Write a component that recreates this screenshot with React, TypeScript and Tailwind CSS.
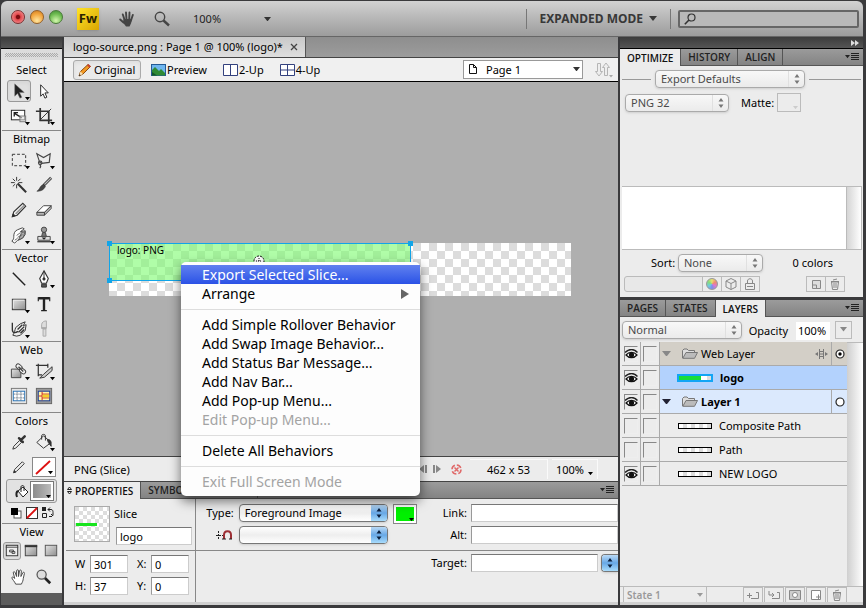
import { useState } from "react"
import type { ReactNode } from "react"
import clsx from "clsx"

interface LayerItem {
  name: string
  kind: "web" | "slice" | "layer" | "object"
  visible: boolean
}

interface MenuEntry {
  label?: string
  submenu?: boolean
  disabled?: boolean
}

const layers: LayerItem[] = [
  { name: "Web Layer", kind: "web", visible: true },
  { name: "logo", kind: "slice", visible: true },
  { name: "Layer 1", kind: "layer", visible: true },
  { name: "Composite Path", kind: "object", visible: false },
  { name: "Path", kind: "object", visible: false },
  { name: "NEW LOGO", kind: "object", visible: true },
]

// an entry without a label is a separator
const menuEntries: MenuEntry[] = [
  { label: "Export Selected Slice..." },
  { label: "Arrange", submenu: true },
  {},
  { label: "Add Simple Rollover Behavior" },
  { label: "Add Swap Image Behavior..." },
  { label: "Add Status Bar Message..." },
  { label: "Add Nav Bar..." },
  { label: "Add Pop-up Menu..." },
  { label: "Edit Pop-up Menu...", disabled: true },
  {},
  { label: "Delete All Behaviors" },
  {},
  { label: "Exit Full Screen Mode", disabled: true },
]

const toolIcons: Record<string, ReactNode> = {
  Pointer: <path d="M6 3v13l3-3 2.500 5 2-1-2.500-5H16z" fill="#222" stroke="#777" strokeWidth=".5" />,
  Subselection: <path d="M7 4v12l2.500-2.500 2 4.500 2-1-2-4.500H15z" fill="#fff" stroke="#222" />,
  Scale: (
    <g fill="none" stroke="#222">
      <rect x="2.500" y="4.500" width="14" height="10" fill="#fff" />
      <path d="M5.500 7.500l8 5M5.500 11V7h4" strokeWidth="1.400" />
      <rect x="11.500" y="10.500" width="6" height="6" stroke="#777" fill="#ddd" fillOpacity=".6" />
    </g>
  ),
  Crop: (
    <g fill="none" stroke="#333" strokeWidth="1.800">
      <path d="M6.500 2v13H19M2 5.500h13.500V19" />
      <path d="M6 15L18 3" strokeWidth="1" />
    </g>
  ),
  Marquee: <rect x="3.500" y="4.500" width="14" height="12" fill="none" stroke="#333" strokeDasharray="3 2" />,
  Lasso: (
    <g fill="none" stroke="#444" strokeWidth="1.200">
      <path d="M6 13L3 4l7 4 7-4-1 9-8 1z" />
      <circle cx="6.500" cy="13.500" r="1.800" />
      <path d="M6 15c1 1 2 2 0 4" />
    </g>
  ),
  "Magic Wand": (
    <g fill="none" stroke="#333">
      <path d="M9 9l9 9" strokeWidth="2.200" />
      <path d="M8 2v4M8 10v4M2 8h4M10 8h4M4 4l2.500 2.500M12 4L9.500 6.500M4 12l2.500-2.500" />
    </g>
  ),
  Brush: (
    <g stroke="#333">
      <path d="M18 3l-8 8" strokeWidth="3" />
      <path d="M18 3l-7 7" stroke="#bbb" strokeWidth="1.300" />
      <path d="M10 10l2 2c-2 4-5 5-9 5 3-1 3-6 7-7z" fill="#444" strokeWidth=".6" />
    </g>
  ),
  Pencil: (
    <g stroke="#333">
      <path d="M3.500 17.500l1.500-5L14.500 3.500l3 3L8.500 16z" fill="#f6f6f6" strokeWidth="1.200" />
      <path d="M7 14.500L16 5.500" stroke="#999" strokeWidth="1.800" />
      <path d="M3.500 17.500l.8-3 2.200 2z" fill="#222" />
    </g>
  ),
  "Stroke Pencil": (
    <g stroke="#333">
      <path d="M5 16.500l1-3.500L14 5l2 2-8 8z" fill="#eee" />
      <path d="M5 16.500l.6-2 1.400 1.400z" fill="#222" />
    </g>
  ),
  Eraser: (
    <g stroke="#444" strokeLinejoin="round">
      <path d="M3 13l7-7h8l-7 7z" fill="#fff" />
      <path d="M3 13v3h8v-3zM11 13v3l7-7V6z" fill="#b5b5b5" />
    </g>
  ),
  Smudge: (
    <g stroke="#444" strokeLinejoin="round">
      <path d="M3 17c2-2 2-3 2-5 0-3 1-6 4-7l5-2 2 1-4 3 5-1v4l-3 4-5 2-3 3z" fill="#fff" />
      <path d="M8 11l4-3M9 13l5-3M6 16l3-2M13 8l4-1-2 6-5 3z" fill="#aaa" strokeWidth=".8" />
    </g>
  ),
  "Rubber Stamp": (
    <g fill="#777" stroke="#444">
      <circle cx="10.500" cy="5" r="2.800" fill="#999" />
      <path d="M9 8h3l1 4H8z" />
      <path d="M4 12h13v4H4z" fill="#ddd" />
      <path d="M3.500 17.500h14" strokeWidth="1.500" />
      <path d="M8 13h5l-2.500 2.500z" fill="#222" stroke="none" />
    </g>
  ),
  Line: <path d="M4 4l13 13" stroke="#222" strokeWidth="1.500" />,
  Pen: (
    <g fill="#fff" stroke="#333">
      <path d="M10.500 2l4.500 8-2 5H8l-2-5z" strokeWidth="1.200" />
      <path d="M10.500 3v7" />
      <circle cx="10.500" cy="10.500" r="1.200" fill="#222" />
      <path d="M8 16h5v3H8z" fill="#555" />
    </g>
  ),
  Rectangle: (
    <g>
      <rect x="3.500" y="5.500" width="14" height="11" fill="url(#metal)" stroke="#333" />
      <path d="M4.500 15V6.500H16" stroke="#eee" fill="none" />
    </g>
  ),
  Text: (
    <g fill="none" stroke="#222">
      <path d="M4.500 4.500h12M10.500 4v13" strokeWidth="2.500" />
      <path d="M4.500 3.500v4M16.500 3.500v4M7.500 17.500h6" strokeWidth="1.200" />
    </g>
  ),
  Freeform: (
    <g fill="none" stroke="#333">
      <path d="M4 17c2-3 2-5 3-8l5-4 5-2-2 4 3-1-1 6-5 5-4 1z" fill="#eee" />
      <path d="M3.500 4v7c0 4 3 4 6 2M9 11l5-5M10 14l6-6M12 15l4-4" strokeWidth="1.400" />
    </g>
  ),
  Knife: (
    <g fill="#ddd" stroke="#aaa">
      <path d="M8 10V6c0-3 3-4 5-4v8z" />
      <path d="M9.500 10.500h3V18h-3z" />
      <path d="M8 9h5" />
    </g>
  ),
  Hotspot: (
    <g stroke="#444">
      <path d="M2.500 8.500h10v9h-10z" fill="url(#metal)" />
      <rect x="7" y="3.500" width="7" height="4.500" rx="2.200" fill="#f4f4f4" transform="rotate(40 10 6)" />
      <rect x="11" y="8" width="7" height="4.500" rx="2.200" fill="#f4f4f4" transform="rotate(40 14 10)" />
      <path d="M10 6l5 5" strokeWidth="1.500" />
    </g>
  ),
  Slice: (
    <g stroke="#333" fill="none">
      <path d="M4.500 3v13M2 4.500h13M4.500 14.500h4M14.500 3v4" strokeWidth="1.300" />
      <path d="M19 6l-9 8-4 4 5-1 8-7z" fill="#ccc" />
    </g>
  ),
  "Hide Slices": (
    <g>
      <rect x="2.500" y="2.500" width="16" height="16" fill="#e6e6e6" stroke="#777" />
      <rect x="4.500" y="5.500" width="12" height="10" fill="#fff" stroke="#2673b8" />
      <path d="M5 8.500h11M5 12.500h11M8.500 6v9M12.500 6v9" stroke="#456" strokeDasharray="1 1" fill="none" />
    </g>
  ),
  "Show Slices": (
    <g>
      <rect x="2.500" y="2.500" width="16" height="16" fill="#9a9a9a" stroke="#666" />
      <rect x="4.500" y="5.500" width="12" height="10" fill="#fff6a8" stroke="#1c3f9b" />
      <path d="M8.500 6v9M5 10.500h3.500M8.500 8.500H16M8.500 12.500H16" stroke="#c22" fill="none" />
      <rect x="9" y="9" width="7" height="3" fill="#f2cf2c" />
    </g>
  ),
  Eyedropper: (
    <g stroke="#333">
      <path d="M4 18l1-3 6-6 2 2-6 6z" fill="#eee" />
      <path d="M10.500 6.500l4 4M13 8l3.500-3.500" strokeWidth="2.600" strokeLinecap="round" />
    </g>
  ),
  "Paint Bucket": (
    <g stroke="#333">
      <path d="M3 11l7-7 8 7-8 6z" fill="#eee" />
      <path d="M8 8V4c0-2 4-2 4 0v5" fill="none" />
      <path d="M14 8c4 0 4 2 4 7l-3-4z" fill="#333" />
    </g>
  ),
  "Standard Screen": (
    <g>
      <rect x="4.500" y="4.500" width="12" height="11" fill="#eee" stroke="#333" />
      <path d="M4 6.500h13M8 9.500h4v2H8zM10.500 11h3v2h-3z" stroke="#444" fill="none" />
    </g>
  ),
  "Full Screen with Menus": (
    <g>
      <rect x="4.500" y="4.500" width="12" height="11" fill="url(#metal)" stroke="#444" />
      <path d="M4 5.500h13" stroke="#333" strokeWidth="2" />
    </g>
  ),
  "Full Screen": <rect x="4.500" y="4.500" width="12" height="11" fill="url(#metal)" stroke="#555" />,
  Hand: (
    <path
      d="M7 18c-1-3-4-5-4-7 1-1 2 0 3 1L4.500 6c0-1.500 1.500-1.500 2 0L8 10V4c0-1.500 2-1.500 2 0v6l1-6c.5-1.300 2-1 2 .3L12.500 10l2-4c.8-1 2-.4 1.700.7L15 12c0 2-1 4-2 6z"
      fill="#fff"
      stroke="#444"
    />
  ),
  Zoom: (
    <g>
      <path d="M11 11l6 6" stroke="#222" strokeWidth="2.800" />
      <circle cx="8" cy="8" r="4.800" fill="#ddd" stroke="#555" strokeWidth="1.300" />
    </g>
  ),
}

function Tool({ name, flyout, active, className = "w-6" }: { name: string; flyout?: boolean; active?: boolean; className?: string }) {
  return (
    <button
      aria-label={name}
      className={clsx(
        "relative flex items-center justify-center rounded-[3px] border",
        active ? "border-[#999] bg-[#e0e0e0] shadow-inner" : "border-transparent",
        className
      )}
    >
      <svg viewBox="0 0 21 21" className="w-5 h-5 shrink-0">{toolIcons[name]}</svg>
      {flyout && <Triangle className="absolute right-0 bottom-0 w-[5px] text-black" />}
    </button>
  )
}

function Triangle({ className }: { className?: string }) {
  return (
    <svg viewBox="0 0 8 5" className={clsx("shrink-0", className)} fill="currentColor">
      <path d="M0 0h8L4 5z" />
    </svg>
  )
}

function ToolSection({ title, className, children }: { title: string; className?: string; children: ReactNode }) {
  return (
    <section className={clsx("mx-px border-b border-[#888]", className)}>
      <h2 className="h-4 text-center text-[11px] leading-4">{title}</h2>
      {children}
    </section>
  )
}

function ToolGrid({ children }: { children: ReactNode }) {
  return <div className="grid auto-rows-[25px] grid-cols-[25px_25px] items-center justify-items-center justify-center">{children}</div>
}

function Stepper({ className }: { className?: string }) {
  return (
    <svg viewBox="0 0 6 10" className={clsx("w-[6px] h-[10px]", className)} fill="currentColor">
      <path d="M3 0l2.500 3.500h-5zM3 10L.5 6.500h5z" />
    </svg>
  )
}

interface PopupProps {
  label: string
  value: string
  variant?: "gray" | "aqua"
  className?: string
}

function Popup({ label, value, variant = "gray", className }: PopupProps) {
  const aqua = variant === "aqua"
  return (
    <div
      className={clsx(
        "relative h-[18px] rounded-[4px] border overflow-hidden shadow-sm",
        aqua
          ? "border-[#777] bg-linear-to-b from-white via-[#eee] to-white text-black"
          : "border-[#aaa] bg-linear-to-b from-[#f8f8f8] to-[#ebebeb] text-[#4a4a4a]",
        className
      )}
    >
      <select aria-label={label} defaultValue={value} className="block w-full h-4 pl-[5px] pr-5 appearance-none text-[11px] leading-4 outline-none">
        <option>{value}</option>
      </select>
      <span
        className={clsx(
          "absolute inset-y-0 right-0 w-4 flex items-center justify-center pointer-events-none",
          aqua ? "bg-linear-to-b from-[#b9d9f5] via-[#67a8e6] to-[#a8dcfc] text-[#0b1f3d]" : "border-l border-[#e0e0e0] text-[#777]"
        )}
      >
        <Stepper />
      </span>
    </div>
  )
}

function PanelTabs({ tabs, active, children }: { tabs: string[]; active: string; children?: ReactNode }) {
  return (
    <div role="tablist" className="flex h-[17px] shrink-0 bg-linear-to-b from-[#9b9b9b] to-[#828282] font-['Open_Sans',sans-serif] text-[10px] font-semibold leading-4">
      {tabs.map((tab) => (
        <button
          key={tab}
          role="tab"
          aria-selected={tab === active}
          className={clsx(
            "flex items-center gap-[3px] border-r border-[#555] px-[7px] whitespace-nowrap",
            tab === active ? "bg-[#ececec] text-[#111]" : "border-b text-[#222]"
          )}
        >
          {tab === active && children}
          {tab}
        </button>
      ))}
      <div className="flex flex-1 items-center justify-end border-b border-[#555] pr-1">
        <button aria-label="Panel menu" className="flex items-center gap-px text-[#222]">
          <Triangle className="w-[5px]" />
          <svg viewBox="0 0 8 8" className="w-2 h-2" stroke="currentColor">
            <path d="M0 .5h8M0 2.500h8M0 4.500h8M0 6.500h8" />
          </svg>
        </button>
      </div>
    </div>
  )
}

function TitleBar() {
  return (
    <header className="flex h-9 shrink-0 items-center rounded-t-md border-b border-[#666] bg-linear-to-b from-[#d2d2d2] to-[#9c9c9c]">
      <div className="flex gap-[5px] pl-[10px] pb-1">
        <button aria-label="Close" className="size-3.5 rounded-full border border-[#7a3030] bg-[radial-gradient(circle_at_50%_50%,#7d0c10_0_20%,#e2484c_32%,#f59a9a_90%)]" />
        <button aria-label="Minimize" className="size-3.5 rounded-full border border-[#94602a] bg-[radial-gradient(circle_at_50%_80%,#ffe6a0,#f2a43c_60%,#c97a24)]" />
        <button aria-label="Zoom window" className="size-3.5 rounded-full border border-[#4a7a3a] bg-[radial-gradient(circle_at_50%_80%,#d3f7ae,#6dbb50_60%,#3f8a36)]" />
      </div>
      <div className="ml-[14px] flex size-[22px] items-center justify-center bg-linear-to-br from-[#ffe326] to-[#d9a600] shadow font-['Open_Sans',sans-serif] text-[13px] font-bold text-[#2b2300]">
        Fw
      </div>
      <button aria-label="Hand" className="ml-5">
        <svg viewBox="0 0 16 16" className="size-4" fill="none" stroke="#444" strokeLinecap="round">
          <path d="M3.800 3.500l2 6M7 1.500l.5 7M10.500 1.500l-.3 7M13.800 4l-2 6M1.200 8.500l3.300 3" strokeWidth="1.900" />
          <path d="M4.600 8h8l-.4 4-1.700 3.500H7l-3-4z" fill="#444" stroke="none" />
        </svg>
      </button>
      <button aria-label="Zoom" className="ml-[19px]">
        <svg viewBox="0 0 16 16" className="size-4" fill="none" stroke="#444">
          <circle cx="6" cy="6" r="4.700" strokeWidth="1.400" />
          <path d="M9.500 9.500l5.500 5" strokeWidth="2.400" />
        </svg>
      </button>
      <div className="relative ml-[23px] w-20">
        <select aria-label="Magnification" defaultValue="100%" className="block w-full appearance-none text-[11px] leading-4 text-[#222]">
          <option>100%</option>
        </select>
        <Triangle className="absolute right-[2px] top-[6px] w-[7px] text-[#333] pointer-events-none" />
      </div>
      <div className="flex-1" />
      <div className="flex h-5 items-center border-x border-[#777] px-[13px]">
        <button className="flex items-center gap-1.5 text-[12px] font-bold leading-4 text-[#383838]">
          EXPANDED MODE
          <Triangle className="w-2" />
        </button>
      </div>
      <label className="ml-[7px] mr-1 flex h-[18px] w-[181px] items-center rounded-[2px] border-2 border-[#666] bg-[#b9b9b9] pl-1">
        <svg viewBox="0 0 12 12" className="size-3" fill="none" stroke="#333">
          <circle cx="7.500" cy="4.500" r="3.500" strokeWidth="1.200" />
          <path d="M5 7L.8 11.200" strokeWidth="1.600" />
        </svg>
        <input aria-label="Search" className="min-w-0 flex-1 pl-1 text-[11px] leading-3 outline-none" />
      </label>
    </header>
  )
}

function ToolsPanel() {
  return (
    <aside className="flex w-[61px] shrink-0 flex-col bg-[#5c5c5c]">
      <div className="h-3 shrink-0 border-b border-black bg-linear-to-b from-[#3c3c3c] to-[#555]" />
      <div className="shrink-0 bg-[#ececec] pb-1">
        <div className="h-[11px] bg-[#dcdcdc] px-1 pt-1">
          <div className="h-1 bg-[repeating-conic-gradient(#aaa_0_25%,transparent_0_50%)] bg-[length:2px_2px]" />
        </div>
        <ToolSection title="Select" className="pt-0.5 pb-0.5">
          <ToolGrid>
            <Tool name="Pointer" flyout active />
            <Tool name="Subselection" />
            <Tool name="Scale" flyout />
            <Tool name="Crop" flyout />
          </ToolGrid>
        </ToolSection>
        <ToolSection title="Bitmap" className="pb-0.5">
          <ToolGrid>
            <Tool name="Marquee" flyout />
            <Tool name="Lasso" flyout />
            <Tool name="Magic Wand" />
            <Tool name="Brush" />
            <Tool name="Pencil" />
            <Tool name="Eraser" />
            <Tool name="Smudge" flyout />
            <Tool name="Rubber Stamp" flyout />
          </ToolGrid>
        </ToolSection>
        <ToolSection title="Vector">
          <ToolGrid>
            <Tool name="Line" />
            <Tool name="Pen" flyout />
            <Tool name="Rectangle" flyout />
            <Tool name="Text" />
            <Tool name="Freeform" flyout />
            <Tool name="Knife" />
          </ToolGrid>
        </ToolSection>
        <ToolSection title="Web" className="pb-1">
          <ToolGrid>
            <Tool name="Hotspot" flyout />
            <Tool name="Slice" flyout />
            <Tool name="Hide Slices" />
            <Tool name="Show Slices" />
          </ToolGrid>
        </ToolSection>
        <ToolSection title="Colors" className="pb-1">
          <ToolGrid>
            <Tool name="Eyedropper" />
            <Tool name="Paint Bucket" flyout />
            <Tool name="Stroke Pencil" />
            <button aria-label="Stroke color" className="relative w-6 h-5 border border-[#888] bg-white">
              <svg viewBox="0 0 20 16" className="w-5 h-4"><path d="M3 15L17 2" stroke="#d11" strokeWidth="1.800" /></svg>
              <Triangle className="absolute right-[2px] bottom-[1px] w-[5px]" />
            </button>
          </ToolGrid>
          <div className="mx-1 flex h-6 items-center justify-between rounded-[3px] border border-[#999] bg-[#e2e2e2] pl-[7px] pr-0.5">
            <button aria-label="Fill tool">
              <svg viewBox="0 0 16 16" className="size-4" stroke="#222" fill="#fff">
                <path d="M4 8l5-4 5 5-5 5z" />
                <path d="M7 9V4c0-2 3-2 3 0v4" fill="none" />
                <path d="M4 8c-2 1-2 3-1 6" fill="none" strokeWidth="2" />
              </svg>
            </button>
            <button aria-label="Fill color" className="relative w-6 h-5 border border-[#777] bg-white p-0.5">
              <span className="block size-full bg-linear-to-r from-[#8d8d8d] to-[#bbb]" />
              <Triangle className="absolute right-[2px] bottom-[2px] w-[5px]" />
            </button>
          </div>
          <div className="flex h-4 items-end justify-center gap-1">
            <button aria-label="Default colors">
              <svg viewBox="0 0 12 12" className="size-3"><rect x="4" y="4" width="7" height="7" fill="#fff" stroke="#555" /><path d="M1 1h7v7H1z" /></svg>
            </button>
            <button aria-label="No color">
              <svg viewBox="0 0 12 12" className="size-3"><rect x=".5" y=".5" width="11" height="11" fill="#fff" stroke="#333" /><path d="M1 11L11 1" stroke="#d11" strokeWidth="1.800" /></svg>
            </button>
            <button aria-label="Swap colors">
              <svg viewBox="0 0 12 12" className="size-3" fill="none" stroke="#222"><path d="M0 0h4v4H0z" fill="#222" stroke="none" /><path d="M.5 6.500h4v4h-4zM6 2.500h3c2 0 2 2 2 3v3M8 .5l-2 2 2 2M9 7l2 2M7 9.500h3" /></svg>
            </button>
          </div>
        </ToolSection>
        <section className="mx-px">
          <h2 className="h-4 text-center text-[11px] leading-4">View</h2>
          <div className="flex h-[22px] items-center justify-around">
            <Tool name="Standard Screen" active className="size-[18px]" />
            <Tool name="Full Screen with Menus" className="size-[18px]" />
            <Tool name="Full Screen" className="size-[18px]" />
          </div>
          <div className="pt-0.5">
            <ToolGrid>
              <Tool name="Hand" />
              <Tool name="Zoom" />
            </ToolGrid>
          </div>
        </section>
      </div>
    </aside>
  )
}

function ViewBar() {
  return (
    <div className="flex h-6 shrink-0 items-center border-b border-black bg-[#f0f0f0] pl-[9px] pr-1 text-[11px] leading-4">
      <button className="flex h-5 w-[68px] items-center gap-0.5 rounded-[3px] border border-[#aaa] bg-[#eaeaea] pl-1 shadow-inner">
        <svg viewBox="0 0 14 14" className="size-3.5">
          <path d="M1 13l1.500-4.500L10 1.500l2.500 2L5 11z" fill="#f39a24" stroke="#8a4b10" />
          <path d="M9 2.500l2.500 2.200 1.300-1.400L10.500 1z" fill="#c74432" />
          <path d="M1 13l1.500-4.500L5 11z" fill="#f6dfb4" />
          <path d="M1 13l.6-1.700 1 1z" />
        </svg>
        Original
      </button>
      <button className="ml-[10px] flex items-center gap-px">
        <svg viewBox="0 0 15 12" className="h-3 w-[15px]">
          <rect x=".5" y=".5" width="14" height="11" fill="#6fb6f0" stroke="#245a94" />
          <path d="M1 6l3-3 4 4 2-2 4 4v2.500H1z" fill="#2f8a35" />
          <path d="M1 8l5 3.500H1z" fill="#14572a" />
        </svg>
        Preview
      </button>
      <button className="ml-4 flex items-center gap-px">
        <svg viewBox="0 0 15 12" className="h-3 w-[15px]" fill="#fff" stroke="#33417e"><path d="M.5 .5h14v11H.5zM7.500 .5v11" /></svg>
        2-Up
      </button>
      <button className="ml-4 flex items-center gap-px">
        <svg viewBox="0 0 15 12" className="h-3 w-[15px]" fill="#fff" stroke="#33417e"><path d="M.5 .5h14v11H.5zM7.500 .5v11M.5 6h14" /></svg>
        4-Up
      </button>
      <div className="flex-1" />
      <div className="relative w-[120px] border border-[#999] bg-white">
        <select aria-label="Page" defaultValue="Page 1" className="block h-[17px] w-full appearance-none pl-[22px] text-[11px] leading-4 outline-none">
          <option>Page 1</option>
        </select>
        <svg viewBox="0 0 8 10" className="absolute left-[5px] top-[3px] h-2.5 w-2 pointer-events-none" fill="#fff" stroke="#111">
          <path d="M.5 .5h4l3 3v6h-7zM4.500 .5v3h3" />
        </svg>
        <Triangle className="absolute right-[2px] top-[6px] w-[7px] text-[#333] pointer-events-none" />
      </div>
      <button aria-label="Move page" className="ml-[11px]">
        <svg viewBox="0 0 20 16" className="h-4 w-5" fill="#eee" stroke="#b5b5b5">
          <path d="M3.500 1.500h3v8h2L5 14 1.500 9.500h2zM10.500 13.500h3v-8h2L12 1 8.500 5.500h2z" />
          <path d="M15 13h4l-2 2.500z" fill="#aaa" stroke="none" />
        </svg>
      </button>
    </div>
  )
}

function Artwork() {
  return (
    <div className="relative h-[53px] w-[462px] bg-[repeating-conic-gradient(#fff_0_25%,#dcdcdc_0_50%)] bg-[length:16px_16px]">
      <div className="absolute left-0 top-0 h-[38px] w-[302px] border border-[#12a5e8] bg-[#7cfb6e]/60">
        <span className="block pl-[7px] text-[10px] leading-3">logo: PNG</span>
        <svg viewBox="0 0 12 12" className="absolute left-[143px] top-[11px] size-3" fill="#fff" stroke="#111">
          <circle cx="6" cy="6" r="5" strokeDasharray="2 1" />
          <path d="M6 3v6M3 6h6" strokeDasharray="1 1" />
        </svg>
        <i className="absolute -left-[3px] -top-[3px] size-[5px] bg-[#12a5e8]" />
        <i className="absolute -right-[3px] -top-[3px] size-[5px] bg-[#12a5e8]" />
        <i className="absolute -left-[3px] -bottom-[3px] size-[5px] bg-[#12a5e8]" />
        <i className="absolute -right-[3px] -bottom-[3px] size-[5px] bg-[#12a5e8]" />
      </div>
    </div>
  )
}

function StatusBar() {
  return (
    <div className="flex h-[26px] shrink-0 items-center border-y border-[#444] bg-[#ececec] pl-[10px] text-[11px] leading-4">
      <span className="flex-1 pt-0.5">PNG (Slice)</span>
      <button aria-label="Previous state" className="text-[#888]">
        <svg viewBox="0 0 8 8" className="size-2" fill="currentColor"><path d="M5 0v8L0 4zM6 0h2v8H6z" /></svg>
      </button>
      <button aria-label="Next state" className="ml-[6px] text-[#888]">
        <svg viewBox="0 0 8 8" className="size-2" fill="currentColor"><path d="M3 0v8l5-4zM0 0h2v8H0z" /></svg>
      </button>
      <button aria-label="Stop" className="ml-[10px] pt-px">
        <svg viewBox="0 0 11 11" className="size-[11px]" fill="none" stroke="#e06a6a">
          <circle cx="5.500" cy="5.500" r="4.500" strokeWidth="1.600" strokeDasharray="5 2" />
          <path d="M3.500 3.500l4 4M7.500 3.500l-4 4" strokeWidth="1.500" />
        </svg>
      </button>
      <span className="ml-2 flex h-5 w-[78px] items-center justify-center border-r border-t border-[#fafafa]">462 x 53</span>
      <button className="ml-1 mr-5 flex h-5 w-[46px] items-center justify-center gap-1 border-t border-r border-[#fafafa]">
        100%
        <Triangle className="mt-2 w-[5px]" />
      </button>
    </div>
  )
}

function Field({ label, value = "", labelClass, className }: { label: string; value?: string; labelClass: string; className: string }) {
  return (
    <label className="flex min-w-0 items-center">
      <span className={clsx("shrink-0", labelClass)}>{label}</span>
      <input
        defaultValue={value}
        className={clsx("h-[18px] min-w-0 border border-[#ccc] border-t-[#777] border-l-[#999] bg-white px-[3px] text-[11px] leading-4 outline-none", className)}
      />
    </label>
  )
}

function PropertiesPanel() {
  return (
    <section className="shrink-0 bg-[#ececec]">
      <PanelTabs tabs={["PROPERTIES", "SYMBOL PROPERTIES"]} active="PROPERTIES">
        <svg viewBox="0 0 5 9" className="-ml-1 h-[9px] w-[5px]" fill="none" stroke="#222"><path d="M.5 3.500l2-2.500 2 2.500zM.5 5.500l2 2.500 2-2.500z" /></svg>
      </PanelTabs>
      <div className="ml-0.5 flex h-[103px] text-[11px] leading-4">
        <div className="w-[130px] shrink-0 border-r border-[#888]">
          <div className="flex h-[52px] gap-1 border-b border-[#888] pl-2 pt-[7px]">
            <div className="flex size-9 items-center border border-[#aaa] bg-[repeating-conic-gradient(#fff_0_25%,#ddd_0_50%)] bg-[length:8px_8px] pl-px">
              <div className="h-[3px] w-[21px] bg-[#17e41d]" />
            </div>
            <div>
              <div className="pb-[5px]">Slice</div>
              <input aria-label="Slice name" defaultValue="logo" className="ml-0.5 block h-[18px] w-[76px] border border-[#ccc] border-t-[#777] border-l-[#999] bg-white px-[3px] text-[11px] leading-4 outline-none" />
            </div>
          </div>
          <div className="grid grid-cols-[62px_auto] gap-y-1 pl-[9px] pt-1">
            <Field label="W" value="301" labelClass="w-[15px]" className="w-[38px]" />
            <Field label="X:" value="0" labelClass="w-[14px]" className="w-[38px]" />
            <Field label="H:" value="37" labelClass="w-[15px]" className="w-[38px]" />
            <Field label="Y:" value="0" labelClass="w-[14px]" className="w-[38px]" />
          </div>
        </div>
        <div className="min-w-0 flex-1 overflow-hidden">
          <div className="flex h-[52px] border-b border-[#888] pt-[5px]">
            <div className="flex w-[192px] shrink-0 flex-col gap-1">
              <div className="flex items-center">
                <span className="w-[43px] pr-[5px] text-right">Type:</span>
                <Popup label="Type" value="Foreground Image" variant="aqua" className="w-[150px]" />
              </div>
              <div className="flex items-center">
                <span className="flex w-[43px] justify-end pr-[6px]">
                  <svg viewBox="0 0 17 10" className="h-2.5 w-[17px]" fill="none" stroke="#222">
                    <path d="M2.500 1v8M0 5.500h9" strokeDasharray="2 1" />
                    <path d="M8 9V5c0-5 7-5 7 0v4" stroke="#9c2f35" strokeWidth="2" />
                    <path d="M6 9h4M13 9h3" />
                  </svg>
                </span>
                <Popup label="Linked behavior" value="" variant="aqua" className="w-[150px]" />
              </div>
            </div>
            <button aria-label="Slice color" className="relative ml-[5px] h-5 w-6 shrink-0 border border-[#888] bg-white p-0.5">
              <span className="block size-full bg-[#00f000]" />
              <Triangle className="absolute right-[2px] bottom-[2px] w-[5px]" />
            </button>
            <div className="flex min-w-0 flex-1 flex-col gap-1">
              <Field label="Link:" labelClass="w-[54px] pr-1 text-right" className="flex-1" />
              <Field label="Alt:" labelClass="w-[54px] pr-1 text-right" className="flex-1" />
            </div>
          </div>
          <div className="flex items-center pl-[221px] pt-[3px]">
            <div className="flex min-w-0 flex-1 [&>label]:flex-1">
              <Field label="Target:" labelClass="w-[54px] pr-1 text-right" className="flex-1" />
            </div>
            <Popup label="Target frame" value="" variant="aqua" className="ml-[3px] w-[17px] rounded-r-none border-r-0" />
          </div>
        </div>
      </div>
      <div className="h-[3px] bg-[#d0d0d0]" />
    </section>
  )
}

function SmallButton({ label, children }: { label: string; children: ReactNode }) {
  return (
    <button aria-label={label} className="flex h-4 w-5 items-center justify-center border border-[#bbb] -ml-px">
      <svg viewBox="0 0 12 12" className="size-3" fill="none" stroke="#888">{children}</svg>
    </button>
  )
}

const trashPath = <path d="M2.500 4h7l-1 7.500h-5zM2 3.500h8M4 2l4-1M5 5v5M7 5v5" />

function OptimizePanel() {
  return (
    <section className="flex flex-col bg-[#ececec] text-[11px] leading-4">
      <PanelTabs tabs={["OPTIMIZE", "HISTORY", "ALIGN"]} active="OPTIMIZE" />
      <div className="flex items-center gap-1 px-0.5 pt-1">
        <hr className="w-[29px] border-[#999]" />
        <Popup label="Saved settings" value="Export Defaults" className="w-[150px]" />
        <hr className="flex-1 border-[#999]" />
      </div>
      <div className="flex items-center px-[5px] pt-[5px]">
        <Popup label="Format" value="PNG 32" className="w-[104px]" />
        <span className="ml-3 w-9">Matte:</span>
        <button aria-label="Matte color" className="flex h-[19px] w-6 items-end justify-end border border-[#bbb] p-0.5">
          <Triangle className="w-[5px] text-[#ccc]" />
        </button>
      </div>
      <div className="mt-[74px] ml-0.5 mr-px flex h-16 border-y border-[#bbb] bg-white">
        <div className="flex-1" />
        <div className="w-4 border-x border-[#bbb] bg-linear-to-r from-[#d5d5d5] to-white" />
      </div>
      <div className="flex items-center pt-1 pl-[31px] pr-[30px]">
        <span className="w-[27px]">Sort:</span>
        <Popup label="Sort" value="None" className="w-[85px]" />
        <span className="flex-1 text-right">0 colors</span>
      </div>
      <div className="flex items-center pb-[5px] pl-1 pr-[18px] pt-1">
        <input aria-label="Color value" className="h-4 w-[79px] rounded-l-[3px] border border-[#bbb] bg-[#e8e8e8] outline-none" />
        <button aria-label="Color wheel" className="-ml-px flex h-4 w-5 items-center justify-center border border-[#bbb]">
          <span className="size-3 rounded-full border border-[#999] bg-[conic-gradient(#e8e070,#ee8a70,#dc78d0,#7a8eea,#70cce0,#86dd7a,#e8e070)]" />
        </button>
        <SmallButton label="Snap to web safe"><path d="M6 .5l5 2.500v6L6 11.500 1 9V3zM1 3l5 2.500L11 3M6 5.500v6" /></SmallButton>
        <SmallButton label="Lock color"><path d="M1.500 5.500h9v6h-9zM3.500 5V3c0-3 5-3 5 0v2M3 8.500h6" /></SmallButton>
        <div className="flex-1" />
        <SmallButton label="Add color"><path d="M2.500 2.500h8v8h-8zM2.500 7h4v3.500" fill="#ddd" /></SmallButton>
        <SmallButton label="Delete color">{trashPath}</SmallButton>
      </div>
    </section>
  )
}

function LayerRow({ layer }: { layer: LayerItem }) {
  const [visible, setVisible] = useState(layer.visible)
  const isFolder = layer.kind === "web" || layer.kind === "layer"
  return (
    <div className="flex h-6 border-b border-[#aaa]">
      <div className="flex w-[19px] items-center justify-center border-r border-[#aaa]">
        <button
          aria-label={`Toggle ${layer.name}`}
          aria-pressed={visible}
          onClick={() => setVisible(!visible)}
          className="flex h-4 w-[14px] items-center justify-center border border-[#eee] border-t-[#888] border-l-[#888]"
        >
          {visible && (
            <svg viewBox="0 0 13 10" className="h-2.5 w-[13px] shrink-0">
              <path d="M0 3.500C4-.5 9-.5 12.500 3.500" fill="none" stroke="#222" strokeWidth="1.400" />
              <path d="M1 6c3-3.500 8-3.500 11 0-3 3.500-8 3.500-11 0z" fill="#fff" stroke="#111" strokeWidth="1.200" />
              <circle cx="6.500" cy="5.800" r="2.600" fill="#111" />
            </svg>
          )}
        </button>
      </div>
      <div className="flex w-[19px] items-center justify-center border-r border-[#aaa]">
        <button aria-label={`Lock ${layer.name}`} className="h-4 w-[14px] border border-[#eee] border-t-[#888] border-l-[#888]" />
      </div>
      <div
        className={clsx(
          "flex min-w-0 flex-1 items-center",
          layer.kind === "web" && "bg-[#d3cfc7]",
          layer.kind === "slice" && "bg-[#b3d2fd]",
          layer.kind === "layer" && "bg-[#dbe9fd]"
        )}
      >
        {isFolder ? (
          <>
            <Triangle className={clsx("ml-0.5 w-[9px]", layer.kind === "web" ? "text-[#888]" : "text-[#223]")} />
            <svg viewBox="0 0 16 11" className="ml-[11px] h-[11px] w-4" stroke="#777">
              <path d="M.5 10V2.500L2 1h3l1.500 1.500h6V5" fill="#ddd" />
              <path d="M.8 10.300L4 4.500h11.500L12.500 10.300z" fill="#bbb" />
            </svg>
          </>
        ) : layer.kind === "slice" ? (
          <div className="ml-[17px] flex h-2 w-9 border-2 border-[#12a5f5] bg-white">
            <div className="w-[22px] bg-[#17dd3a]" />
            <div className="ml-1.5 w-1 bg-[#ddd]" />
          </div>
        ) : (
          <div className="ml-[18px] h-1.5 w-[34px] border border-black bg-[repeating-linear-gradient(90deg,#fff_0_4px,#ddd_4px_8px)]" />
        )}
        <span className={clsx("flex-1 truncate", isFolder ? "pl-[3px]" : "pl-[7px]", (layer.kind === "slice" || layer.kind === "layer") && "font-bold")}>
          {layer.name}
        </span>
        {layer.kind === "web" && (
          <svg viewBox="0 0 13 10" className="mr-[3px] h-2.5 w-[13px]" fill="none" stroke="#777">
            <path d="M4.500 0v10M8.500 0v10M4 2.500h5M4 5h5M4 7.500h5" />
            <path d="M3 3v4L0 5zM10 3v4l3-2z" fill="#777" stroke="none" />
          </svg>
        )}
        {isFolder && (
          <button aria-label={`Select ${layer.name}`} className="flex h-full w-4 items-center justify-center border-l border-[#aaa]">
            <svg viewBox="0 0 10 10" className="size-2.5">
              <circle cx="5" cy="5" r="4" fill="#fff" stroke="#222" strokeWidth="1.200" />
              {layer.kind === "web" && <circle cx="5" cy="5" r="1.700" />}
            </svg>
          </button>
        )}
      </div>
    </div>
  )
}

function LayersPanel() {
  return (
    <section className="flex min-h-0 flex-1 flex-col bg-[#ececec] text-[11px] leading-4">
      <PanelTabs tabs={["PAGES", "STATES", "LAYERS"]} active="LAYERS" />
      <div className="flex h-[25px] shrink-0 items-center pl-0.5 pr-[11px]">
        <Popup label="Blend mode" value="Normal" className="w-[120px]" />
        <label className="flex flex-1 items-center justify-end pt-0.5">
          Opacity
          <input defaultValue="100%" className="ml-2 h-[18px] w-[34px] bg-white px-0.5 text-[11px] leading-4 outline-none" />
        </label>
        <button aria-label="Opacity slider" className="ml-[5px] flex h-[18px] w-[17px] items-center justify-center border border-[#bbb]">
          <Triangle className="w-[7px] text-[#888]" />
        </button>
      </div>
      <div className="flex min-h-0 flex-1 pl-0.5">
        <div className="min-w-0 flex-1">
          {layers.map((layer) => (
            <LayerRow key={layer.name} layer={layer} />
          ))}
        </div>
        <div className="w-4 border-t border-[#bbb] bg-linear-to-r from-[#cfcfcf] to-white" />
      </div>
      <div className="flex h-4 shrink-0 items-center border-t border-[#bbb] pl-[3px] pr-4">
        <div className="relative w-[84px] border-x border-[#bbb] text-[#999]">
          <select aria-label="State" defaultValue="State 1" className="block h-[15px] w-full appearance-none pl-[3px] text-[10px] font-semibold leading-3 outline-none">
            <option>State 1</option>
          </select>
          <Triangle className="absolute right-[3px] top-[6px] w-[6px] pointer-events-none" />
        </div>
        <div className="flex-1" />
        <div className="flex gap-0.5">
          <SmallButton label="New layer"><path d="M4 9.500h7.500v-6H9M0 6.500h5M2.500 4v5" /></SmallButton>
          <SmallButton label="New sublayer"><path d="M4 9.500h7.500v-6H9M1 2v4h5M4 4l2 2-2 2" /></SmallButton>
          <SmallButton label="Add mask"><path d="M.5 1.500h11v9H.5z" fill="#ccc" /><circle cx="6" cy="6" r="2.500" fill="#fff" /></SmallButton>
          <SmallButton label="New bitmap"><path d="M1.500 1.500h9v9h-9z" fill="#fff" /><path d="M6 8h5M8.500 5.500v5" /></SmallButton>
          <SmallButton label="Delete layer">{trashPath}</SmallButton>
        </div>
      </div>
      <div className="h-[3px] shrink-0 bg-[#d0d0d0]" />
    </section>
  )
}

function ContextMenu() {
  return (
    <ul role="menu" className="absolute left-[181px] top-[262px] w-[239px] rounded-[5px] bg-[#fdfdfd] pt-[3px] pb-[5px] text-[14px] leading-[19px] shadow-[0_5px_12px_rgba(0,0,0,0.55)]">
      {menuEntries.map((entry, index) =>
        entry.label ? (
          <li key={index} role="none">
            <button
              role="menuitem"
              disabled={entry.disabled}
              className={clsx(
                "flex h-[19px] w-full items-center justify-between pl-[21px] pr-[11px] text-left",
                index === 0 && "bg-linear-to-b from-[#6180ef] to-[#2b51e6] text-white",
                entry.disabled && "text-[#a3a3a3]"
              )}
            >
              {entry.label}
              {entry.submenu && (
                <svg viewBox="0 0 8 10" className="h-2.5 w-2" fill="#666"><path d="M0 0v10l8-5z" /></svg>
              )}
            </button>
          </li>
        ) : (
          <li key={index} role="separator" className="flex h-3 items-center"><hr className="w-full border-[#ddd]" /></li>
        )
      )}
    </ul>
  )
}

export default function App() {
  return (
    <div className="relative flex h-screen min-h-[600px] flex-col overflow-hidden bg-[#3a3a3c] pl-px pr-[3px] pt-px pb-[3px] font-['Noto_Sans','Open_Sans',sans-serif] text-black">
      {/* shared gradient for the metallic tool icons */}
      <svg className="absolute size-0" aria-hidden="true">
        <defs>
          <linearGradient id="metal" x1="0" y1="0" x2="1" y2="1">
            <stop offset="0" stopColor="#e4e4e4" />
            <stop offset="1" stopColor="#8e8e8e" />
          </linearGradient>
        </defs>
      </svg>
      <TitleBar />
      <div className="flex min-h-0 flex-1">
        <ToolsPanel />
        <main className="ml-0.5 flex min-w-0 flex-1 flex-col">
          <div className="flex h-[21px] shrink-0 border-b border-[#444] bg-linear-to-b from-[#8e8e8e] to-[#9c9c9c] text-[11px] leading-4">
            <div className="flex w-[242px] items-center justify-between border-r border-[#555] bg-linear-to-b from-[#c9c9c9] to-[#dedede] pl-[9px] pr-[7px] whitespace-nowrap">
              <span>logo-source.png : Page 1 @ 100% (logo)*</span>
              <button aria-label="Close document">
                <svg viewBox="0 0 8 8" className="size-2" stroke="#444" strokeWidth="1.300"><path d="M1 1l6 6M7 1L1 7" /></svg>
              </button>
            </div>
          </div>
          <ViewBar />
          <div className="flex min-h-0 flex-1 items-center justify-center overflow-hidden bg-[#afafaf] pr-0.5">
            <Artwork />
          </div>
          <StatusBar />
          <PropertiesPanel />
        </main>
        <aside className="ml-0.5 flex w-[243px] shrink-0 flex-col">
          <div className="flex h-3 shrink-0 items-center justify-end border-b border-black bg-linear-to-b from-[#3c3c3c] to-[#555] pr-1">
            <button aria-label="Collapse panels">
              <svg viewBox="0 0 8 6" className="h-1.5 w-2" fill="#ddd"><path d="M0 0v6l4-3zM4 0v6l4-3z" /></svg>
            </button>
          </div>
          <OptimizePanel />
          <div className="h-[3px] shrink-0 bg-[#3a3a3c]" />
          <LayersPanel />
        </aside>
      </div>
      <ContextMenu />
    </div>
  )
}
